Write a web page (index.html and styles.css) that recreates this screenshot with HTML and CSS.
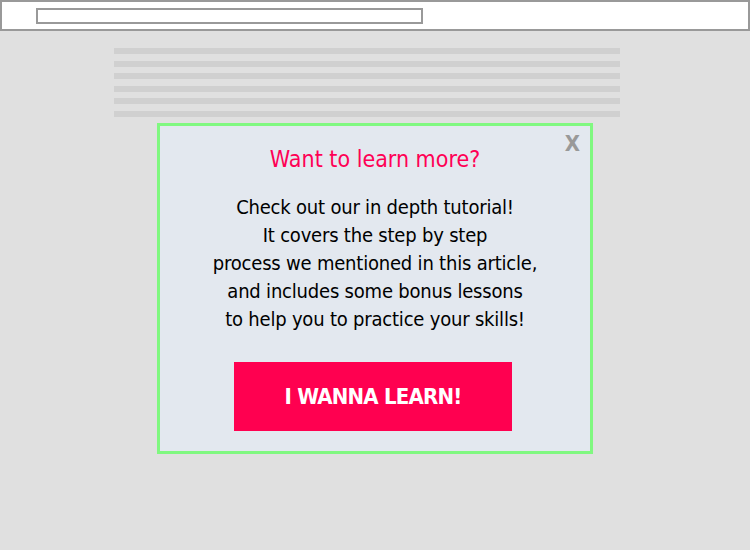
FILE: index.html
```html
<!DOCTYPE html>
<html lang="en">
<head>
<meta charset="utf-8">
<title>Popup</title>
<link rel="stylesheet" href="styles.css">
</head>
<body>
<header class="topbar">
  <div class="address"></div>
</header>
<main class="page">
  <div class="article">
    <div class="line"></div>
    <div class="line"></div>
    <div class="line"></div>
    <div class="line"></div>
    <div class="line"></div>
    <div class="line"></div>
  </div>
  <section class="popup">
    <span class="close">X</span>
    <h2 class="title">Want to learn more?</h2>
    <p class="body">Check out our in depth tutorial!<br>It covers the step by step<br>process we mentioned in this article,<br>and includes some bonus lessons<br>to help you to practice your skills!</p>
    <a class="cta">I WANNA LEARN!</a>
  </section>
</main>
</body>
</html>
```
FILE: styles.css
```css
html, body {
  margin: 0;
  padding: 0;
}
body {
  background: #e0e0e0;
  width: 750px;
  height: 550px;
  font-family: "DejaVu Sans Condensed", "DejaVu Sans", sans-serif;
}
.topbar {
  box-sizing: border-box;
  height: 31px;
  background: #fff;
  border: 2px solid #999;
  padding: 6px 0 0 34px;
}
.address {
  box-sizing: border-box;
  width: 387px;
  height: 16px;
  border: 2px solid #999;
  background: #fff;
}
.page {
  display: flex;
  flex-direction: column;
}
.article {
  margin: 17px 0 0 114px;
  width: 506px;
  display: flex;
  flex-direction: column;
  gap: 6.6px;
}
.line {
  height: 6px;
  background: #d0d0d0;
}
.popup {
  position: relative;
  box-sizing: border-box;
  margin: 6px 0 0 157px;
  width: 436px;
  height: 331px;
  border: 3px solid #80f880;
  background: #e3e8ef;
  display: flex;
  flex-direction: column;
  align-items: center;
  padding-top: 18px;
}
.close {
  position: absolute;
  top: 5px;
  right: 10px;
  font-size: 22px;
  font-weight: bold;
  color: #999;
  line-height: 26px;
}
.title {
  margin: 0;
  font-size: 23px;
  line-height: 30px;
  font-weight: normal;
  color: #ff0055;
}
.body {
  margin: 19px 0 0;
  font-size: 20px;
  line-height: 28px;
  letter-spacing: -0.2px;
  color: #000;
  text-align: center;
}
.cta {
  margin: 29px 4px 0 0;
  width: 278px;
  height: 69px;
  background: #ff0050;
  color: #fff;
  font-size: 22px;
  font-weight: bold;
  letter-spacing: -0.8px;
  display: flex;
  align-items: center;
  justify-content: center;
}
```
